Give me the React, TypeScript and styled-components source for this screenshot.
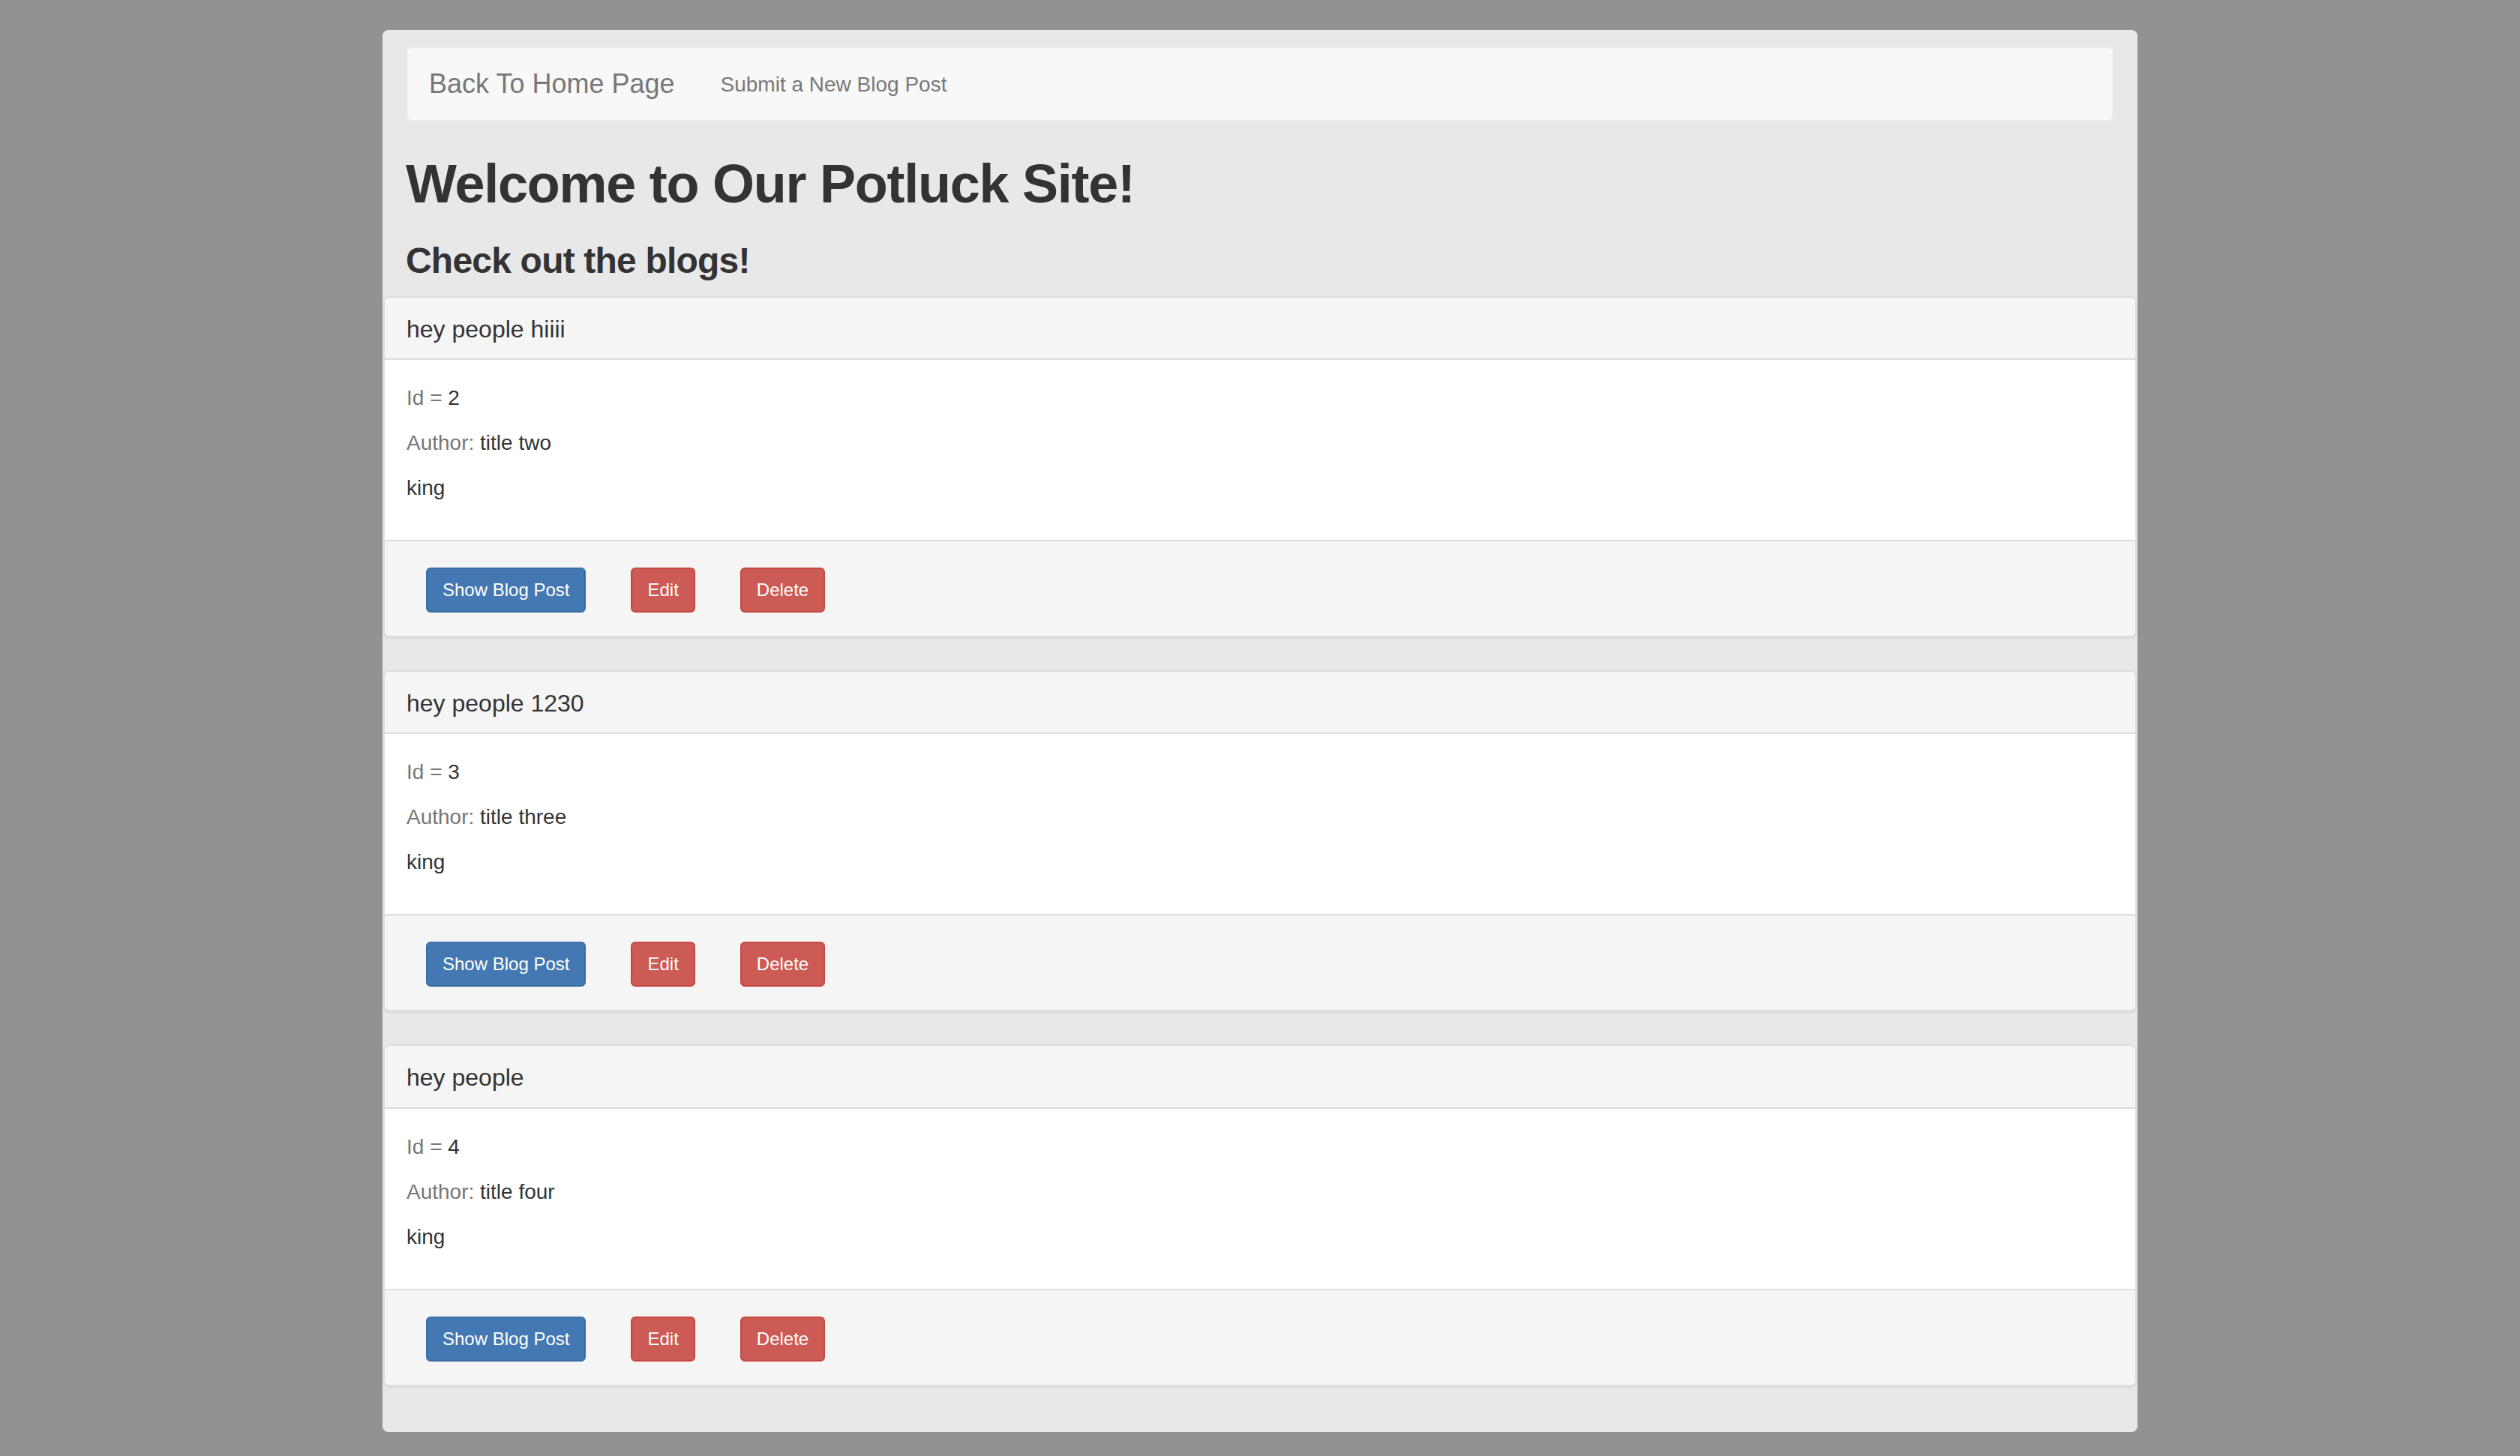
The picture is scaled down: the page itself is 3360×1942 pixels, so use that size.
import React from "react";
import styled, { createGlobalStyle } from "styled-components";

const GlobalStyle = createGlobalStyle`
  html, body {
    margin: 0;
    padding: 0;
    background: #929292;
  }
  body {
    font-family: "Liberation Sans", Arial, Helvetica, sans-serif;
    color: #333333;
  }
  * { box-sizing: border-box; }
`;

const Page = styled.div`
  padding: 40px 0 29px;
`;

const Container = styled.div`
  width: 2340px;
  margin: 0 auto;
  background: #e8e8e8;
  border-radius: 8px;
  padding: 22px 0 17px;
`;

const Navbar = styled.nav`
  margin: 0 32px;
  height: 100px;
  background: #f8f8f8;
  border: 2px solid #eeeeee;
  border-radius: 8px;
  display: flex;
  align-items: center;
  padding: 0 28px;
`;

const Brand = styled.a`
  font-size: 36px;
  line-height: 40px;
  color: #777777;
  text-decoration: none;
  margin-right: 61px;
`;

const NavLink = styled.a`
  font-size: 28px;
  line-height: 40px;
  padding-top: 2px;
  color: #777777;
  text-decoration: none;
`;

const Title = styled.h1`
  margin: 44px 31px 0;
  font-size: 72px;
  font-weight: 700;
  letter-spacing: -1.25px;
  line-height: 1.1;
  color: #333333;
`;

const Subtitle = styled.h3`
  margin: 37px 31px 20px;
  font-size: 48px;
  font-weight: 700;
  letter-spacing: -0.8px;
  line-height: 1.1;
  color: #333333;
`;

const Panel = styled.section`
  margin: 0 1px 44px;
  background: #ffffff;
  border: 2px solid #dddddd;
  border-radius: 8px;
  overflow: hidden;
  box-shadow: 0 2px 3px rgba(0, 0, 0, 0.07);
`;

const PanelHeading = styled.div`
  background: #f5f5f5;
  border-bottom: 2px solid #dddddd;
  padding: 25px 29px 21px;
  font-size: 32px;
  line-height: 1.1;
  color: #333333;
`;

const PanelBody = styled.div`
  padding: 31px 29px 29px;
`;

const Line = styled.p`
  margin: 0 0 20px;
  font-size: 28px;
  line-height: 40px;
  color: #333333;
`;

const Label = styled.span`
  color: #777777;
`;

const PanelFooter = styled.div`
  background: #f5f5f5;
  border-top: 2px solid #dddddd;
  padding: 35px 55px 31px;
  display: flex;
  align-items: center;
  gap: 60px;
`;

const Button = styled.button<{ $variant: "primary" | "danger" }>`
  height: 60px;
  padding: 0 20px;
  font-family: inherit;
  font-size: 24px;
  line-height: 1;
  color: #ffffff;
  border-radius: 6px;
  border: 2px solid ${(p) => (p.$variant === "primary" ? "#3b6da6" : "#c4483f")};
  background: ${(p) => (p.$variant === "primary" ? "#4478b2" : "#cb5b54")};
  cursor: pointer;
`;

type Post = { title: string; id: number; author: string; body: string };

const posts: Post[] = [
  { title: "hey people hiiii", id: 2, author: "title two", body: "king" },
  { title: "hey people 1230", id: 3, author: "title three", body: "king" },
  { title: "hey people", id: 4, author: "title four", body: "king" },
];

export default function App() {
  return (
    <>
      <GlobalStyle />
      <Page>
        <Container>
          <Navbar>
            <Brand href="#">Back To Home Page</Brand>
            <NavLink href="#">Submit a New Blog Post</NavLink>
          </Navbar>
          <Title>Welcome to Our Potluck Site!</Title>
          <Subtitle>Check out the blogs!</Subtitle>
          {posts.map((p) => (
            <Panel key={p.id}>
              <PanelHeading>{p.title}</PanelHeading>
              <PanelBody>
                <Line>
                  <Label>Id = </Label>
                  {p.id}
                </Line>
                <Line>
                  <Label>Author: </Label>
                  {p.author}
                </Line>
                <Line>{p.body}</Line>
              </PanelBody>
              <PanelFooter>
                <Button $variant="primary">Show Blog Post</Button>
                <Button $variant="danger">Edit</Button>
                <Button $variant="danger">Delete</Button>
              </PanelFooter>
            </Panel>
          ))}
        </Container>
      </Page>
    </>
  );
}
